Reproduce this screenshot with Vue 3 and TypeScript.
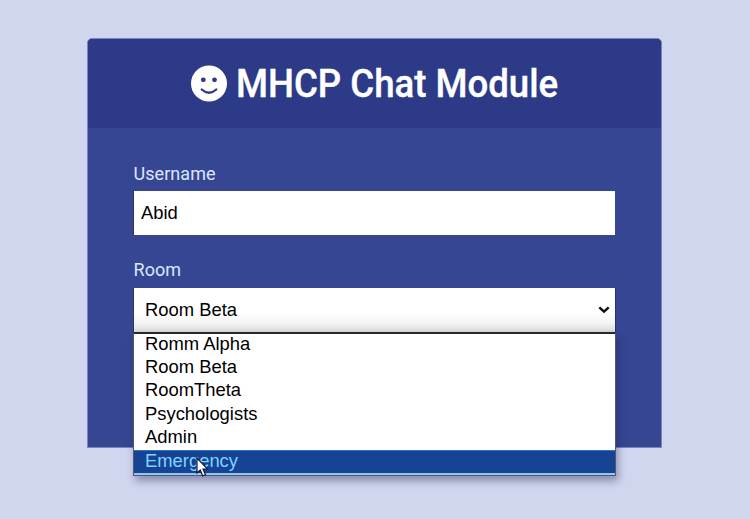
<script setup lang="ts">
import { ref } from 'vue'

const username = ref('Abid')
const selected = ref('Room Beta')
const active = ref('Emergency')
const rooms: string[] = ['Romm Alpha', 'Room Beta', 'RoomTheta', 'Psychologists', 'Admin', 'Emergency']
</script>

<template>
  <main class="page">
    <section class="card">
      <header class="head">
        <svg class="smile" viewBox="0 0 36 36" aria-hidden="true">
          <circle cx="18" cy="18" r="18" fill="#fff" />
          <circle cx="12.3" cy="14.3" r="2.4" fill="#2c3a87" />
          <circle cx="23.5" cy="14.3" r="2.4" fill="#2c3a87" />
          <path d="M10.7 24Q18 30.5 25.3 24" fill="none" stroke="#2c3a87" stroke-width="2.3" stroke-linecap="round" />
        </svg>
        <h1>MHCP Chat Module</h1>
      </header>
      <form class="body" @submit.prevent>
        <label class="label user-label" for="username"><span>Username</span></label>
        <input id="username" v-model="username" class="field" type="text" />
        <div class="label room-label"><span>Room</span></div>
        <div class="select">
          <span>{{ selected }}</span>
          <svg class="chevron" viewBox="0 0 12 8" aria-hidden="true">
            <path d="M1.3 1.3L6 5.6L10.7 1.3" fill="none" stroke="#111" stroke-width="2.5" />
          </svg>
          <ul class="menu">
            <li v-for="room in rooms" :key="room" :class="{ active: room === active }" @mouseenter="active = room">
              <span>{{ room }}</span>
            </li>
          </ul>
          <svg class="cursor" viewBox="0 0 12 20" aria-hidden="true">
            <path d="M1 1V16L4.3 13L6.7 19L9.5 17.8L7 12H11.5Z" fill="#fff" stroke="#101830" stroke-width="1.2" />
          </svg>
        </div>
      </form>
    </section>
  </main>
</template>

<style>
body {
  background: #d0d6ee;
  overflow: hidden;
}
</style>

<style scoped>
.page {
  box-sizing: border-box;
  height: 519px;
  padding: 38px 88px 0 87px;
  font-family: Roboto, "Liberation Sans", sans-serif;
}
.card {
  box-sizing: border-box;
  height: 410px;
  background: #364692;
  border: 1px solid #7685bf;
  border-radius: 5px 5px 0 0;
}
.head {
  box-sizing: border-box;
  height: 89px;
  display: flex;
  align-items: center;
  justify-content: center;
  gap: 9px;
  padding-bottom: 1px;
  background: #2c3a87;
  border-radius: 4px 4px 0 0;
  color: #fff;
}
.smile {
  width: 36px;
  height: 37px;
}
h1 {
  width: 323px;
  margin: 0;
  padding-top: 2px;
  font-size: 39px;
  line-height: 44px;
  font-weight: 500;
  white-space: nowrap;
  -webkit-text-stroke: 0.4px #fff;
  transform: scaleX(0.938);
  transform-origin: left center;
}
.body {
  padding: 35px 46px 0;
}
.label {
  display: block;
  height: 28px;
  line-height: 22px;
  font-size: 18px;
  letter-spacing: 0.05px;
  text-indent: -0.5px;
  color: #dbe6ff;
}
.room-label {
  height: 29px;
  margin-top: 24px;
}
.field {
  display: block;
  box-sizing: border-box;
  width: 481px;
  height: 44px;
  padding: 0 7px;
  border: 0;
  border-radius: 0;
  outline: 0;
  background: #fff;
  box-shadow: -1px 0 #34345f;
  color: #000;
  font-family: "Liberation Sans", Arial, sans-serif;
  font-size: 18.4px;
}
.select {
  position: relative;
  box-sizing: border-box;
  width: 481px;
  height: 44px;
  padding: 0 5px 0 11px;
  display: flex;
  align-items: center;
  justify-content: space-between;
  background: linear-gradient(#fff 55%, #f4f4f4 80%, #dadada);
  box-shadow: -1px 0 #34345f, 1px 0 #27317c;
  color: #000;
  font-family: "Liberation Sans", Arial, sans-serif;
  font-size: 18.4px;
}
.chevron {
  width: 12px;
  height: 8px;
}
.menu {
  position: absolute;
  top: 44px;
  left: -1px;
  box-sizing: border-box;
  width: 483px;
  height: 144px;
  margin: 0;
  padding: 0;
  list-style: none;
  background: #fff;
  border: 1px solid #505878;
  border-top: 2px solid #262830;
  box-shadow: 2px 5px 8px rgba(30, 30, 80, 0.4);
}
.menu li {
  box-sizing: border-box;
  height: 23.2px;
  padding-left: 11px;
  line-height: 20px;
}
.menu li.active {
  height: 25px;
  background: #164394;
  border-top: 1px solid #2f74c0;
  border-bottom: 2px solid #8fc9f0;
  line-height: 19px;
  color: #7fd4ff;
}
.cursor {
  position: absolute;
  left: 62px;
  top: 169px;
  width: 12px;
  height: 20px;
}
</style>
